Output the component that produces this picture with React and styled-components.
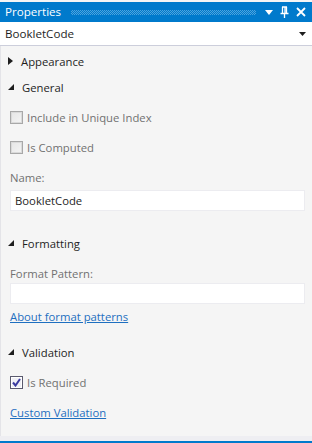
import React from 'react';
import styled, { createGlobalStyle } from 'styled-components';

const GlobalStyle = createGlobalStyle`
    html, body {
        margin: 0;
        padding: 0;
        background: #eeeef2;
    }
    body {
        font-family: "Open Sans", "Noto Sans", sans-serif;
        font-size: 11.3px;
    }
`;

const Panel = styled.div`
    width: 312px;
    height: 443px;
    padding-top: 2px;
    box-sizing: border-box;
    display: flex;
    flex-direction: column;
    background: #f5f5f5;
`;

const TitleBar = styled.div`
    height: 20px;
    background: #007acc;
    display: flex;
    align-items: center;
    padding: 0 6px 0 5px;
    color: #fff;
    gap: 6px;
`;

const Title = styled.span`
    font-size: 11.6px;
    line-height: 20px;
`;

const Grip = styled.div`
    flex: 1;
    height: 5px;
    margin: 0 3px 0 4px;
    background-image: repeating-conic-gradient(#4ea3dd 0 25%, transparent 0 50%);
    background-size: 2px 2px;
`;

const TitleIcons = styled.div`
    display: flex;
    align-items: center;
    gap: 7px;
`;

const Combo = styled.div`
    height: 23px;
    background: #fff;
    border-bottom: 1px solid #cccedb;
    display: flex;
    align-items: center;
    justify-content: space-between;
    padding: 0 6px 0 5px;
    color: #1e1e1e;
    font-size: 11.6px;
`;

const Body = styled.div`
    flex: 1;
    padding: 2px 7px 0 7px;
    border-left: 1px solid #e4e4e8;
    display: flex;
    flex-direction: column;
`;

const Header = styled.div`
    height: 26px;
    display: flex;
    align-items: center;
    gap: 8px;
    margin-top: ${p => p.$mt || 0}px;
    color: #1e1e1e;
`;

const Section = styled.div`
    display: flex;
    flex-direction: column;
    padding-left: 2px;
    padding-top: ${p => p.$pt || 0}px;
`;

const CheckRow = styled.label`
    height: 30px;
    display: flex;
    align-items: center;
    gap: 4px;
    color: #717171;
    margin-top: ${p => p.$mt || 0}px;
`;

const Box = styled.span`
    width: 11px;
    height: 11px;
    border: 1px solid ${p => (p.$checked ? '#5a5a6e' : '#a8a8a8')};
    background: ${p => (p.$checked ? '#f0f0f6' : 'linear-gradient(135deg, #e6e6e6, #f4f4f4)')};
    box-shadow: inset 0 0 0 1px ${p => (p.$checked ? '#ffffff' : '#dadada')};
    display: flex;
    align-items: center;
    justify-content: center;
`;

const FieldLabel = styled.div`
    height: 20px;
    display: flex;
    align-items: center;
    color: #717171;
    margin-top: ${p => p.$mt || 0}px;
`;

const TextBox = styled.div`
    height: 19px;
    margin-top: ${p => p.$mt || 0}px;
    background: #fff;
    border: 1px solid #ececf0;
    display: flex;
    align-items: center;
    padding: 0 4px;
    color: #1e1e1e;
`;

const LinkText = styled.a`
    height: 20px;
    display: flex;
    align-items: center;
    color: #1e6fc0;
    text-decoration: underline;
    align-self: flex-start;
    margin-top: ${p => p.$mt || 0}px;
`;

const Footer = styled.div`
    height: 5px;
    background: #eeeef2;
    border-bottom: 2px solid #007acc;
`;

const Collapsed = () => (
    <svg width="5" height="8" viewBox="0 0 5 8">
        <path d="M0 0 L5 4 L0 8 Z" fill="#1e1e1e" />
    </svg>
);

const Expanded = () => (
    <svg width="6" height="6" viewBox="0 0 6 6">
        <path d="M6 0 L6 6 L0 6 Z" fill="#1e1e1e" />
    </svg>
);

const Check = () => (
    <svg width="9" height="9" viewBox="0 0 9 9">
        <path d="M1 4.5 L3.5 7.5 L8 1" stroke="#3b3ba0" strokeWidth="2" fill="none" />
    </svg>
);

const CheckBox = ({ checked, label, mt }) => (
    <CheckRow $mt={mt}>
        <Box $checked={checked}>{checked && <Check />}</Box>
        {label}
    </CheckRow>
);

export default function App() {
    return (
        <>
            <GlobalStyle />
            <Panel>
                <TitleBar>
                    <Title>Properties</Title>
                    <Grip />
                    <TitleIcons>
                        <svg width="8" height="5" viewBox="0 0 8 5">
                            <path d="M0 0 L8 0 L4 5 Z" fill="#fff" />
                        </svg>
                        <svg width="9" height="12" viewBox="0 0 9 12">
                            <path d="M2 1 H7 M2.5 1 V7 M6.5 1 V7 M5 1 V7 M0.5 7.5 H8.5 M4.5 7.5 V12" stroke="#fff" strokeWidth="1.3" fill="none" />
                        </svg>
                        <svg width="10" height="10" viewBox="0 0 10 10">
                            <path d="M1 1 L9 9 M9 1 L1 9" stroke="#fff" strokeWidth="1.8" />
                        </svg>
                    </TitleIcons>
                </TitleBar>
                <Combo>
                    <span>BookletCode</span>
                    <svg width="7" height="4" viewBox="0 0 7 4">
                        <path d="M0 0 L7 0 L3.5 4 Z" fill="#1e1e1e" />
                    </svg>
                </Combo>
                <Body>
                    <Header><Collapsed />Appearance</Header>
                    <Header><Expanded />General</Header>
                    <Section $pt={2}>
                        <CheckBox label="Include in Unique Index" />
                        <CheckBox label="Is Computed" />
                        <FieldLabel $mt={5}>Name:</FieldLabel>
                        <TextBox $mt={3}>BookletCode</TextBox>
                    </Section>
                    <Header $mt={19}><Expanded />Formatting</Header>
                    <Section>
                        <FieldLabel $mt={7}>Format Pattern:</FieldLabel>
                        <TextBox />
                        <LinkText $mt={2}>About format patterns</LinkText>
                    </Section>
                    <Header $mt={13}><Expanded />Validation</Header>
                    <Section>
                        <CheckBox checked label="Is Required" mt={2} />
                        <LinkText $mt={5}>Custom Validation</LinkText>
                    </Section>
                </Body>
                <Footer />
            </Panel>
        </>
    );
}
